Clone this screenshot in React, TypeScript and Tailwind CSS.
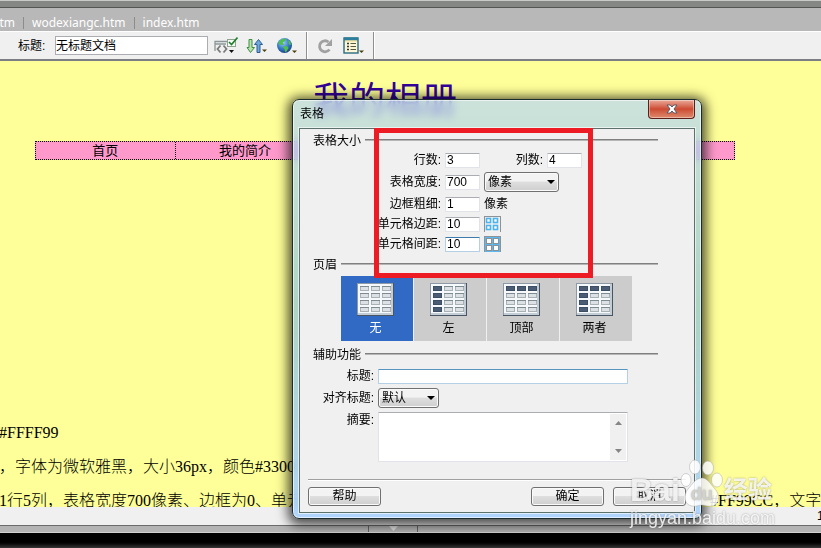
import type { FocusEvent, ReactNode } from "react";
import { clsx } from "clsx";

const NAV_CELLS = ["首页", "我的简介", "", "", ""];

const HEADER_OPTIONS = [
	{ label: "无", left: false, top: false },
	{ label: "左", left: true, top: false },
	{ label: "顶部", left: false, top: true },
	{ label: "两者", left: true, top: true },
];

const BUTTON_FACE =
	"rounded-[3px] border border-[#707070] bg-linear-to-b from-[#f3f3f3] from-45% via-[#dedede] via-50% to-[#cfcfcf] shadow-[inset_0_0_0_1px_#fafafa]";

const INPUT_FACE = "rounded-[1px] border bg-white outline-none";

function ValidateIcon() {
	return (
		<svg width="24" height="20" viewBox="0 0 24 20" aria-hidden="true">
			<path d="M1 15V5.500h12M1.500 8H12" fill="none" stroke="#8c9698" strokeWidth="1.300" />
			<rect x="13.500" y="3.500" width="8" height="7" fill="#f4faf2" stroke="#8ea48e" />
			<path d="M15 6l2.500 2.500L23.500 1.500" fill="none" stroke="#1f7d2c" strokeWidth="1.600" />
			<path d="M6.500 9.500L3.500 13l3 3.500M9.500 9.500l3 3.500-3 3.500" fill="none" stroke="#7b7b7b" strokeWidth="1.800" />
			<path d="M15 14h5l-2.500 3z" fill="#111" />
		</svg>
	);
}

function TransferIcon() {
	return (
		<svg width="22" height="20" viewBox="0 0 22 20" aria-hidden="true">
			<path d="M3 3.500h3v8h2.500L4.500 16.500 1 11.500h2z" fill="#b9e2b0" stroke="#3f8f45" />
			<path d="M11 16.500v-8H8.500L12.500 3.500l4 5H14v8z" fill="#6fa8dc" stroke="#2e5f93" />
			<path d="M16 13.500h5L18.500 16z" fill="#4a4108" />
		</svg>
	);
}

function GlobeIcon() {
	return (
		<svg width="22" height="20" viewBox="0 0 22 20" aria-hidden="true">
			<defs>
				<radialGradient id="globe" cx="0.4" cy="0.3" r="0.7">
					<stop offset="0" stopColor="#9fd0f5" />
					<stop offset="0.6" stopColor="#3579c6" />
					<stop offset="1" stopColor="#1d4688" />
				</radialGradient>
			</defs>
			<circle cx="8.500" cy="9.500" r="7.500" fill="url(#globe)" />
			<path d="M4 4.500c2-2 5-2 6-1.500L9 5 6.500 6.500 8 8.500l-2 .5-2.500-.5L2.500 7zM8.500 10l3 .5 1 1.500-2 3.500L9 16l-.500-3-1.500-1.500zM12 4l2.500 2 .5 3-2-.5z" fill="#4fc04a" />
			<path d="M16 14.500h5L18.500 17z" fill="#4a4108" />
		</svg>
	);
}

function RefreshIcon() {
	return (
		<svg width="19" height="20" viewBox="0 0 19 20" aria-hidden="true">
			<path d="M13.500 13.500A5.500 5.500 0 1 1 12.500 6" fill="none" stroke="#a1a1a1" strokeWidth="2.800" />
			<path d="M16 3v7H9z" fill="#a1a1a1" />
		</svg>
	);
}

function ViewOptionsIcon() {
	return (
		<svg width="22" height="20" viewBox="0 0 22 20" aria-hidden="true">
			<rect x="1" y="2" width="14" height="15" fill="#fbf7d8" stroke="#2b6c80" strokeWidth="1.400" />
			<path d="M1 3h14" stroke="#2b7f9c" strokeWidth="3" />
			<path d="M2 5h12" stroke="#f0d98a" />
			<path d="M4 7.500h2M4 10.500h2M4 13.500h2" stroke="#333" strokeWidth="1.600" />
			<path d="M7.500 7.500H13M7.500 10.500H13M7.500 13.500H13" stroke="#555b3c" strokeWidth="1.200" />
			<path d="M16 14.500h5L18.500 17z" fill="#4a4108" />
		</svg>
	);
}

function ToolButton({ label, children }: { label: string; children: ReactNode }) {
	return (
		<button type="button" aria-label={label} className="shrink-0">
			{children}
		</button>
	);
}

function ToolDivider() {
	return <div className="w-0.5 self-stretch border-l border-[#8f8f8f] bg-white" />;
}

function CellIcon({ spacing }: { spacing: boolean }) {
	return (
		<svg width="17" height="16" viewBox="0 0 17 16" aria-hidden="true">
			<rect width="17" height="16" fill="#8d9296" />
			<rect x="1" y="1" width="15" height="15" fill={spacing ? "#5cb8ee" : "#f2f2f2"} />
			{[2, 9].map((x) =>
				[2, 9].map((y) => (
					<rect
						key={`${x}-${y}`}
						x={x + 0.5}
						y={y + 0.5}
						width={spacing ? 5 : 4}
						height={spacing ? 5 : 4}
						fill="#fff"
						stroke={spacing ? "#8b9093" : "#4db3ee"}
						strokeWidth={spacing ? 1 : 1.6}
					/>
				)),
			)}
		</svg>
	);
}

function GridIcon({ left, top }: { left: boolean; top: boolean }) {
	return (
		<svg width="37" height="33" viewBox="0 0 37 33" aria-hidden="true">
			<rect width="37" height="33" fill="#4a5563" />
			<rect width="36" height="32" fill="#8e99a5" />
			<rect x="1" y="1" width="35" height="31" fill="#c3cdd6" />
			<rect x="1" y="1" width="33" height="29" fill="#f6f9fb" />
			{[0, 1, 2, 3].map((row) =>
				[0, 1, 2].map((col) => {
					const dark = (left && col === 0) || (top && row === 0);
					const x = 3 + col * 11;
					const y = 3 + row * 7;
					return (
						<g key={`${row}-${col}`}>
							<rect
								x={x + 0.5}
								y={y + 0.5}
								width="8"
								height="4"
								fill={dark ? "#4a5d75" : "#dbe1e4"}
								stroke={dark ? "#3d4d63" : "#a9b1b5"}
							/>
							<path d={`M${x} ${y + 0.5}h9`} stroke={dark ? "#3d4d63" : "#7f8a90"} />
						</g>
					);
				}),
			)}
		</svg>
	);
}

function SectionTitle({ children }: { children: ReactNode }) {
	return (
		<div className="flex h-5 items-center gap-1">
			<h2 className="pt-0.5">{children}</h2>
			<div className="h-0.5 flex-1 border-t border-[#808080] bg-[#b5b5b5]" />
		</div>
	);
}

function caretToEnd(event: FocusEvent<HTMLInputElement>) {
	const end = event.target.value.length;
	event.target.setSelectionRange(end, end);
}

function NumberField({ id, value, focused }: { id: string; value: string; focused?: boolean }) {
	return (
		<input
			id={id}
			type="text"
			defaultValue={value}
			autoFocus={focused}
			onFocus={caretToEnd}
			className={clsx(
				"h-[15px] w-[35px] pl-px",
				INPUT_FACE,
				focused
					? "border-[#b5cfe7] border-t-[#3d7bad]"
					: "border-[#e2e3ea] border-t-[#abadb3]",
			)}
		/>
	);
}

function SelectField({ id, value, className }: { id: string; value: string; className: string }) {
	return (
		<div className={clsx("relative h-5", className)}>
			<select
				id={id}
				defaultValue={value}
				className={clsx("block h-5 w-full appearance-none pl-[3px]", BUTTON_FACE)}
			>
				<option>{value}</option>
			</select>
			<svg
				width="8"
				height="4"
				viewBox="0 0 8 4"
				aria-hidden="true"
				className="pointer-events-none absolute top-2 right-1"
			>
				<path d="M0 0h8L4 4z" fill="#000" />
			</svg>
		</div>
	);
}

function DialogButton({ children }: { children: ReactNode }) {
	return (
		<button type="button" className={clsx("h-[19px] w-[73px] leading-[17px]", BUTTON_FACE)}>
			{children}
		</button>
	);
}

function TableDialog() {
	return (
		<div
			role="dialog"
			aria-labelledby="dialog-title"
			className="absolute top-[99px] left-[292px] w-[410px] rounded-[7px] border border-[#1c2b2b] bg-linear-to-b from-[#b6d6f6]/70 via-[#92c5d2]/75 via-50% to-[#a9d0ff]/90 px-[6px] pb-[5px] text-xs shadow-[0_2px_12px_4px_rgba(0,0,0,0.7),inset_0_0_0_1px_rgba(255,255,255,0.6)] backdrop-blur-xs"
		>
			<div className="flex h-7 items-start justify-between pl-px">
				<h1 id="dialog-title" className="leading-7">
					表格
				</h1>
				<button
					type="button"
					aria-label="关闭"
					className="flex h-[19px] w-[47px] items-center justify-center rounded-b-[4px] border border-t-0 border-[#5a1f1a] bg-linear-to-b from-[#e9a99b] from-0% via-[#cc4a31] via-50% to-[#dd8a6c] shadow-[inset_0_0_0_1px_rgba(255,255,255,0.4)]"
				>
					<svg width="12" height="10" viewBox="0 0 12 10" aria-hidden="true">
						<path
							d="M1 1h3.200L6 3l1.800-2H11L8 5l3 4H7.800L6 7 4.200 9H1l3-4z"
							fill="#fff"
							stroke="#545a68"
						/>
					</svg>
				</button>
			</div>

			<div className="border border-[#5c706c] bg-[#f0f0f0] shadow-[0_0_0_1px_rgba(255,255,255,0.6)]">
				<div className="pt-px pr-9 pl-[13px]">
					<SectionTitle>表格大小</SectionTitle>
					<div className="grid grid-cols-[128px_1fr] grid-rows-[20px_24px_20px_20px_20px] items-center gap-x-1">
						<label htmlFor="rows" className="text-right">
							行数:
						</label>
						<div className="flex items-center">
							<NumberField id="rows" value="3" />
							<label htmlFor="cols" className="w-[67px] pr-1 text-right">
								列数:
							</label>
							<NumberField id="cols" value="4" />
						</div>
						<label htmlFor="width" className="text-right">
							表格宽度:
						</label>
						<div className="flex items-center gap-1">
							<NumberField id="width" value="700" />
							<SelectField id="unit" value="像素" className="w-[75px]" />
						</div>
						<label htmlFor="border" className="text-right">
							边框粗细:
						</label>
						<div className="flex items-center gap-1">
							<NumberField id="border" value="1" />
							<span>像素</span>
						</div>
						<label htmlFor="padding" className="text-right">
							单元格边距:
						</label>
						<div className="flex items-center gap-1">
							<NumberField id="padding" value="10" />
							<CellIcon spacing={false} />
						</div>
						<label htmlFor="spacing" className="text-right">
							单元格间距:
						</label>
						<div className="flex items-center gap-1">
							<NumberField id="spacing" value="10" focused />
							<CellIcon spacing />
						</div>
					</div>

					<SectionTitle>页眉</SectionTitle>
					<div className="mt-0.5 flex gap-px pl-7">
						{HEADER_OPTIONS.map((option, i) => (
							<button
								key={option.label}
								type="button"
								aria-pressed={i === 0}
								className={clsx(
									"flex h-[65px] w-[72px] flex-col items-center pt-[7px] pr-[3px]",
									i === 0 ? "bg-[#316ac5] text-white" : "bg-[#cccccc] text-black",
								)}
							>
								<GridIcon left={option.left} top={option.top} />
								<span className="leading-6">{option.label}</span>
							</button>
						))}
					</div>

					<div className="pt-[3px]">
						<SectionTitle>辅助功能</SectionTitle>
					</div>
					<div className="grid grid-cols-[61px_250px] grid-rows-[24px_20px_54px] items-center gap-x-1">
						<label htmlFor="caption" className="text-right">
							标题:
						</label>
						<input
							id="caption"
							type="text"
							className={clsx("h-[15px] w-full border-[#b5cfe7] border-t-[#5794bf]", INPUT_FACE)}
						/>
						<label htmlFor="align" className="text-right">
							对齐标题:
						</label>
						<SelectField id="align" value="默认" className="w-[61px]" />
						<label htmlFor="summary" className="self-start pt-1 text-right">
							摘要:
						</label>
						<div
							className={clsx(
								"flex h-[50px] self-end border-[#e2e3ea] border-t-[#abadb3] p-px",
								INPUT_FACE,
							)}
						>
							<textarea id="summary" className="h-full flex-1 resize-none outline-none" />
							<div className="flex w-4 flex-col items-center justify-between bg-[#f0f0f0] py-[7px]">
								<svg width="7" height="4" viewBox="0 0 7 4" aria-hidden="true">
									<path d="M0 4h7L3.500 0z" fill="#858585" />
								</svg>
								<svg width="7" height="4" viewBox="0 0 7 4" aria-hidden="true">
									<path d="M0 0h7L3.500 4z" fill="#858585" />
								</svg>
							</div>
						</div>
					</div>
				</div>

				<div className="mx-2 mt-[17px] flex gap-[9px] border-t border-[#a0a0a0] pt-[7px] pb-[6px] shadow-[inset_0_1px_0_#fff]">
					<DialogButton>帮助</DialogButton>
					<div className="flex-1" />
					<DialogButton>确定</DialogButton>
					<DialogButton>取消</DialogButton>
				</div>
			</div>

			{/* highlight box around the size fields */}
			<div className="pointer-events-none absolute top-7 left-[81px] h-[150px] w-[219px] border-[5px] border-[#ed1c24]" />
		</div>
	);
}

function Watermark() {
	return (
		<div className="pointer-events-none absolute top-[459px] left-[630px] font-['Liberation_Sans','Noto_Sans_CJK_SC',sans-serif] text-white/85 [text-shadow:0_0_2px_rgba(90,90,90,0.6)]">
			<div className="flex h-[49px] items-end">
				<span className="text-[32px] leading-9 font-bold">Bai</span>
				<div className="relative h-[49px] w-[44px]">
					<svg width="44" height="49" viewBox="0 0 44 49" aria-hidden="true">
						<g fill="#fff" fillOpacity="0.85" stroke="#999" strokeOpacity="0.4">
							<ellipse cx="6" cy="21" rx="5" ry="6.500" />
							<ellipse cx="15" cy="8" rx="5.500" ry="7" />
							<ellipse cx="28" cy="9" rx="5.500" ry="7" />
							<ellipse cx="37" cy="21" rx="5.500" ry="7" />
							<path d="M22 19c6 0 9 7 13 11 5 5 5 16-3 17-4 1-7-1-10-1s-6 2-10 1c-8-1-9-11-4-17 4-4 7-11 14-11z" />
						</g>
					</svg>
					<span className="absolute inset-x-0 bottom-1 text-center text-lg leading-5 font-bold text-[#d2d2cc]">
						du
					</span>
				</div>
				<span className="text-2xl leading-9 font-bold">经验</span>
			</div>
			<div className="text-lg leading-5">jingyan.baidu.com</div>
		</div>
	);
}

export default function App() {
	return (
		<div className="relative flex h-screen flex-col overflow-hidden bg-black font-['Liberation_Sans','Noto_Sans_CJK_SC',sans-serif] text-black">
			<div className="h-2 shrink-0 border-t border-b border-t-[#c9cbc9] border-b-[#555555] bg-[#858785]" />
			<div className="flex h-6 shrink-0 items-center gap-2 border-b border-white bg-[#b8b8b8] pt-1.5 font-['Noto_Sans',sans-serif] text-xs text-white">
				<a href="#htm" className="flex w-[15px] justify-end">
					htm
				</a>
				<div className="h-3 w-px bg-[#8c8c8c]" />
				<a href="#wodexiangc">wodexiangc.htm</a>
				<div className="h-3 w-px bg-[#8c8c8c]" />
				<a href="#index">index.htm</a>
			</div>
			<div className="flex h-[29px] shrink-0 items-center gap-1.5 border-b-2 border-[#7d7d85] bg-[#f0f0f0] pl-[18px] text-xs">
				<label htmlFor="doc-title" className="w-[31px]">
					标题:
				</label>
				<input
					id="doc-title"
					type="text"
					defaultValue="无标题文档"
					className="h-[19px] w-[153px] border border-[#abadb3] bg-white pb-0.5 outline-none"
				/>
				<div className="flex items-center gap-2 self-stretch">
					<ToolButton label="检查页面">
						<ValidateIcon />
					</ToolButton>
					<ToolButton label="文件管理">
						<TransferIcon />
					</ToolButton>
					<ToolButton label="预览">
						<GlobeIcon />
					</ToolButton>
					<ToolDivider />
					<ToolButton label="刷新">
						<RefreshIcon />
					</ToolButton>
					<ToolButton label="视图选项">
						<ViewOptionsIcon />
					</ToolButton>
					<ToolDivider />
				</div>
			</div>

			<main className="min-h-0 flex-1 overflow-hidden bg-[#ffff99]">
				<div className="ml-[35px] w-[700px] pt-4">
					<div className="text-center text-4xl leading-[48px] text-[#330099]">我的相册</div>
					<nav className="mt-4 grid h-[19px] grid-cols-5 border border-dotted border-black bg-[#ff99cc] text-[13px] leading-[17px]">
						{NAV_CELLS.map((cell, i) => (
							<a
								key={i}
								href={`#nav-${i}`}
								className="border-r border-dotted border-black text-center last:border-r-0"
							>
								{cell}
							</a>
						))}
					</nav>
				</div>
				<div className="mt-64 -ml-px font-['Liberation_Serif','Noto_Sans_CJK_SC',serif] text-base leading-[34px] font-light whitespace-nowrap">
					<p>#FFFF99</p>
					<p>，字体为微软雅黑，大小36px，颜色#3300</p>
					<p className="flex">
						<span className="w-[711px] shrink-0">1行5列，表格宽度700像素、边框为0、单元</span>
						<span>#FF99CC，文字居</span>
					</p>
				</div>
			</main>

			<footer className="shrink-0">
				<div className="flex h-[18px] items-center justify-end overflow-hidden bg-[#f0f0f0] text-xs">
					<span className="w-1 shrink-0">1</span>
				</div>
				<div className="flex h-2 border-t border-b border-t-[#6b6b6b] border-b-[#d0d0d0] bg-[#b4b4b4] pl-[368px]">
					<div className="flex w-[50px] justify-center border-x border-[#666666]">
						<svg width="9" height="5" viewBox="0 0 9 5" aria-hidden="true">
							<path d="M0 0h9L4.500 5z" fill="#e4e4e4" />
						</svg>
					</div>
				</div>
				<div className="h-[15px] bg-linear-to-b from-black from-50% to-[#383838]" />
			</footer>

			<TableDialog />
			<Watermark />
		</div>
	);
}
